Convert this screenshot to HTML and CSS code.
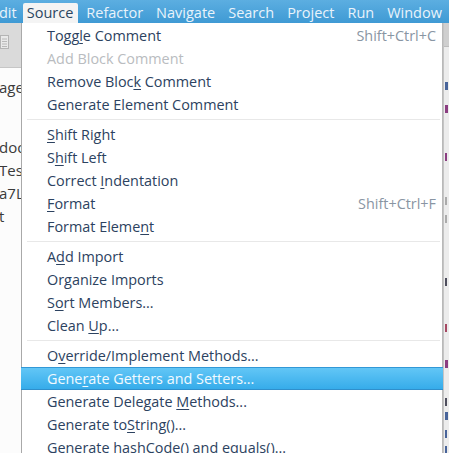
FILE: index.html
```html
<!DOCTYPE html>
<html>
<head>
<meta charset="utf-8">
<link rel="stylesheet" href="styles.css">
</head>
<body>
<div class="page">
  <div class="menubar">
    <span class="mb-item mb-cut">dit</span>
    <span class="mb-item mb-active">Source</span>
    <span class="mb-item">Refactor</span>
    <span class="mb-item">Navigate</span>
    <span class="mb-item">Search</span>
    <span class="mb-item">Project</span>
    <span class="mb-item">Run</span>
    <span class="mb-item">Window</span>
  </div>
  <div class="workspace">
    <div class="left-panel">
      <div class="toolbar">
        <svg class="tb-icon" width="10" height="15" viewBox="0 0 10 15">
          <rect x="0.5" y="0.5" width="8" height="13" fill="#e9e9e9" stroke="#b4b4b4"/>
          <path d="M2 4h5M2 6.5h5M2 9h5M2 11.5h5" stroke="#b8b8b8" stroke-width="1"/>
        </svg>
      </div>
      <div class="tree">
        <div class="tree-line first">age</div>
        <div class="tree-line gap">doo</div>
        <div class="tree-line">Tes</div>
        <div class="tree-line">a7L</div>
        <div class="tree-line">t</div>
      </div>
    </div>
    <div class="menu">
      <div class="mi"><span class="label">Togg<u>l</u>e Comment</span><span class="accel">Shift+Ctrl+C</span></div>
      <div class="mi disabled"><span class="label">Add Block Comment</span></div>
      <div class="mi"><span class="label">Remove Bloc<u>k</u> Comment</span></div>
      <div class="mi"><span class="label">Generate Element Comment</span></div>
      <div class="sep"></div>
      <div class="mi"><span class="label"><u>S</u>hift Right</span></div>
      <div class="mi"><span class="label">S<u>h</u>ift Left</span></div>
      <div class="mi"><span class="label">Correct <u>I</u>ndentation</span></div>
      <div class="mi"><span class="label"><u>F</u>ormat</span><span class="accel">Shift+Ctrl+F</span></div>
      <div class="mi"><span class="label">Format Eleme<u>n</u>t</span></div>
      <div class="sep"></div>
      <div class="mi"><span class="label">A<u>d</u>d Import</span></div>
      <div class="mi"><span class="label">Organize Imports</span></div>
      <div class="mi"><span class="label">S<u>o</u>rt Members...</span></div>
      <div class="mi"><span class="label">Clean <u>U</u>p...</span></div>
      <div class="sep"></div>
      <div class="mi"><span class="label">O<u>v</u>erride/Implement Methods...</span></div>
      <div class="mi selected"><span class="label">Gene<u>r</u>ate Getters and Setters...</span></div>
      <div class="mi"><span class="label">Generate Delegate <u>M</u>ethods...</span></div>
      <div class="mi"><span class="label">Generate to<u>S</u>tring()...</span></div>
      <div class="mi"><span class="label">Generate hashCode() and equals()...</span></div>
    </div>
    <div class="right-strip">
      <div class="rs-top"></div>
      <div class="rs-mark blue" style="margin-top:35px"></div>
      <div class="rs-mark purple" style="margin-top:15px"></div>
      <div class="rs-mark purple thin" style="margin-top:40px"></div>
      <div class="rs-mark grey thin" style="margin-top:36px"></div>
      <div class="rs-mark grey thin" style="margin-top:10px"></div>
      <div class="rs-mark dark thin" style="margin-top:55px"></div>
      <div class="rs-mark red thin" style="margin-top:38px"></div>
      <div class="rs-mark purple" style="margin-top:28px"></div>
      <div class="rs-mark dark thin" style="margin-top:30px"></div>
      <div class="rs-mark blue" style="margin-top:6px"></div>
      <div class="rs-mark blue thin" style="margin-top:10px"></div>
      <div class="rs-mark blue thin" style="margin-top:8px"></div>
    </div>
  </div>
</div>
</body>
</html>
```

FILE: styles.css
```css
* { box-sizing: border-box; }
html, body { margin: 0; padding: 0; }
body {
  width: 449px;
  height: 453px;
  overflow: hidden;
  background: #ffffff;
  font-family: "Open Sans", "DejaVu Sans", sans-serif;
}
.page {
  width: 449px;
  height: 453px;
  display: flex;
  flex-direction: column;
  overflow: hidden;
}
.menubar {
  height: 23px;
  flex: none;
  display: flex;
  align-items: flex-end;
  background: linear-gradient(#5caee1, #3f9ad4);
  color: #e9f3fb;
  font-size: 14.5px;
  white-space: nowrap;
  overflow: hidden;
}
.mb-item {
  height: 20px;
  line-height: 20px;
  padding: 0 6px 0 7px;
}
.mb-cut {
  padding: 0;
  margin-left: -1px;
  margin-right: 6px;
}
.mb-active {
  background: #f4f4f4;
  color: #2b4661;
  padding: 0 5px 0 4px;
  margin-right: 1px;
  border-radius: 2px 2px 0 0;
}
.workspace {
  flex: 1;
  display: flex;
  min-height: 0;
}
.left-panel {
  width: 21px;
  flex: none;
  overflow: hidden;
  background: #fcfcfc;
}
.toolbar {
  height: 45px;
  background: #dadada;
  border-bottom: 1px solid #c6c6c6;
  padding: 12px 0 0 0;
}
.tb-icon { display: block; }
.tree {
  font-size: 15px;
  color: #3a3a3a;
  white-space: nowrap;
}
.tree-line {
  height: 23px;
  line-height: 23px;
  margin-left: -1px;
}
.tree-line.first { margin-top: 8px; }
.tree-line.gap { margin-top: 37px; }
.menu {
  width: 422px;
  flex: none;
  background: #ffffff;
  border-left: 1px solid #a9a9a9;
  border-right: 1px solid #b9b9b9;
  padding-top: 1px;
  font-size: 14.4px;
  color: #2c4260;
}
.mi {
  height: 23px;
  display: flex;
  align-items: center;
  justify-content: space-between;
  padding: 0 6px 0 25px;
  white-space: nowrap;
}
.mi u {
  text-decoration: underline;
  text-decoration-thickness: 1px;
  text-underline-offset: 2px;
}
.mi.disabled { color: #b9bcc0; }
.accel { color: #8995a3; }
.mi.selected {
  margin: 0 -1px;
  padding-left: 26px;
  background: linear-gradient(#62c6f6, #36acea);
  border-top: 1px solid #3298d6;
  border-bottom: 1px solid #2f8fcc;
  color: #f2faff;
}
.sep {
  height: 7px;
  padding-top: 3px;
  margin: 0 2px 0 5px;
}
.sep::before {
  content: "";
  display: block;
  height: 1px;
  background: #e8e8e8;
}
.right-strip {
  flex: 1;
  background: #ececec;
  border-left: 1px solid #c4c4c4;
  overflow: hidden;
}
.rs-top {
  height: 24px;
  background: #cfcfcf;
  border-bottom: 1px solid #bdbdbd;
}
.rs-mark {
  height: 8px;
  width: 3px;
  margin-left: 1px;
  opacity: 0.85;
}
.rs-mark.thin { width: 2px; }
.rs-mark.blue { background: #2c4c8c; }
.rs-mark.purple { background: #7a1f6e; }
.rs-mark.grey { background: #a0a0a0; }
.rs-mark.dark { background: #333344; }
.rs-mark.red { background: #9a2b4a; }
```
